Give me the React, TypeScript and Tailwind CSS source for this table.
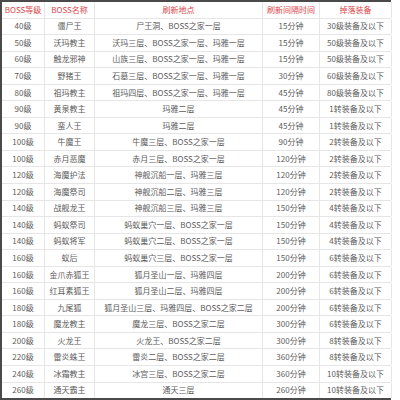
import React from "react";

const rows: [string, string, string, string, string][] = [
  ["40级", "僵尸王", "尸王洞、BOSS之家一层", "15分钟", "30级装备及以下"],
  ["50级", "沃玛教主", "沃玛三层、BOSS之家一层、玛雅一层", "15分钟", "50级装备及以下"],
  ["60级", "触龙邪神", "山族三层、BOSS之家一层、玛雅一层", "15分钟", "50级装备及以下"],
  ["70级", "野猪王", "石墓三层、BOSS之家一层、玛雅一层", "30分钟", "60级装备及以下"],
  ["80级", "祖玛教主", "祖玛四层、BOSS之家一层、玛雅一层", "45分钟", "80级装备及以下"],
  ["90级", "黄泉教主", "玛雅二层", "45分钟", "1转装备及以下"],
  ["90级", "蛮人王", "玛雅二层", "45分钟", "1转装备及以下"],
  ["100级", "牛魔王", "牛魔三层、BOSS之家一层", "90分钟", "2转装备及以下"],
  ["100级", "赤月恶魔", "赤月三层、BOSS之家一层", "120分钟", "2转装备及以下"],
  ["120级", "海魔护法", "神舰沉船一层、玛雅三层", "120分钟", "2转装备及以下"],
  ["120级", "海魔祭司", "神舰沉船二层、玛雅三层", "120分钟", "2转装备及以下"],
  ["140级", "战舰龙王", "神舰沉船三层、玛雅三层", "150分钟", "4转装备及以下"],
  ["140级", "蚂蚁祭司", "蚂蚁巢穴一层、BOSS之家一层", "150分钟", "4转装备及以下"],
  ["140级", "蚂蚁将军", "蚂蚁巢穴二层、BOSS之家一层", "150分钟", "4转装备及以下"],
  ["160级", "蚁后", "蚂蚁巢穴三层、BOSS之家一层", "150分钟", "6转装备及以下"],
  ["160级", "金爪赤狐王", "狐月圣山一层、玛雅四层", "200分钟", "6转装备及以下"],
  ["160级", "红耳素狐王", "狐月圣山二层、玛雅四层", "200分钟", "6转装备及以下"],
  ["180级", "九尾狐", "狐月圣山三层、玛雅四层、BOSS之家二层", "200分钟", "6转装备及以下"],
  ["180级", "魔龙教主", "魔龙三层、BOSS之家二层", "300分钟", "6转装备及以下"],
  ["200级", "火龙王", "火龙王、BOSS之家二层", "300分钟", "8转装备及以下"],
  ["220级", "雷炎蛛王", "雷炎二层、BOSS之家二层", "360分钟", "8转装备及以下"],
  ["240级", "冰霜教主", "冰宫三层、BOSS之家二层", "360分钟", "10转装备及以下"],
  ["260级", "通天霸主", "通天三层", "260分钟", "10转装备及以下"],
];

const header = ["BOSS等级", "BOSS名称", "刷新地点", "刷新间隔时间", "掉落装备"];
const widths = ["w-[43px]", "w-[50px]", "w-[168px]", "w-[57px]", "w-[72px]"];

export default function App() {
  return (
    <div
      className="w-[400px] h-[400px] bg-white overflow-hidden"
      style={{ fontFamily: '"Noto Sans CJK SC", "Noto Sans", sans-serif' }}
    >
      <div className="w-[391px] h-[400px] flex flex-col border-t-2 border-b-2 border-l-2 border-[#4a4a4a]">
        <div className="flex flex-1 border-b border-[#e6e6e6]">
          {header.map((h, i) => (
            <div
              key={i}
              className={`${widths[i]} shrink-0 flex items-center justify-center text-[8px] text-[#d9464a] whitespace-nowrap overflow-hidden border-r border-[#e6e6e6]`}
            >
              {h}
            </div>
          ))}
        </div>
        {rows.map((r, ri) => (
          <div
            key={ri}
            className={`flex flex-1 ${ri < rows.length - 1 ? "border-b border-[#e6e6e6]" : ""}`}
          >
            {r.map((c, i) => (
              <div
                key={i}
                className={`${widths[i]} shrink-0 flex items-center justify-center text-[8px] text-[#5c5c5c] whitespace-nowrap overflow-hidden border-r border-[#e6e6e6]`}
              >
                {c}
              </div>
            ))}
          </div>
        ))}
      </div>
    </div>
  );
}
